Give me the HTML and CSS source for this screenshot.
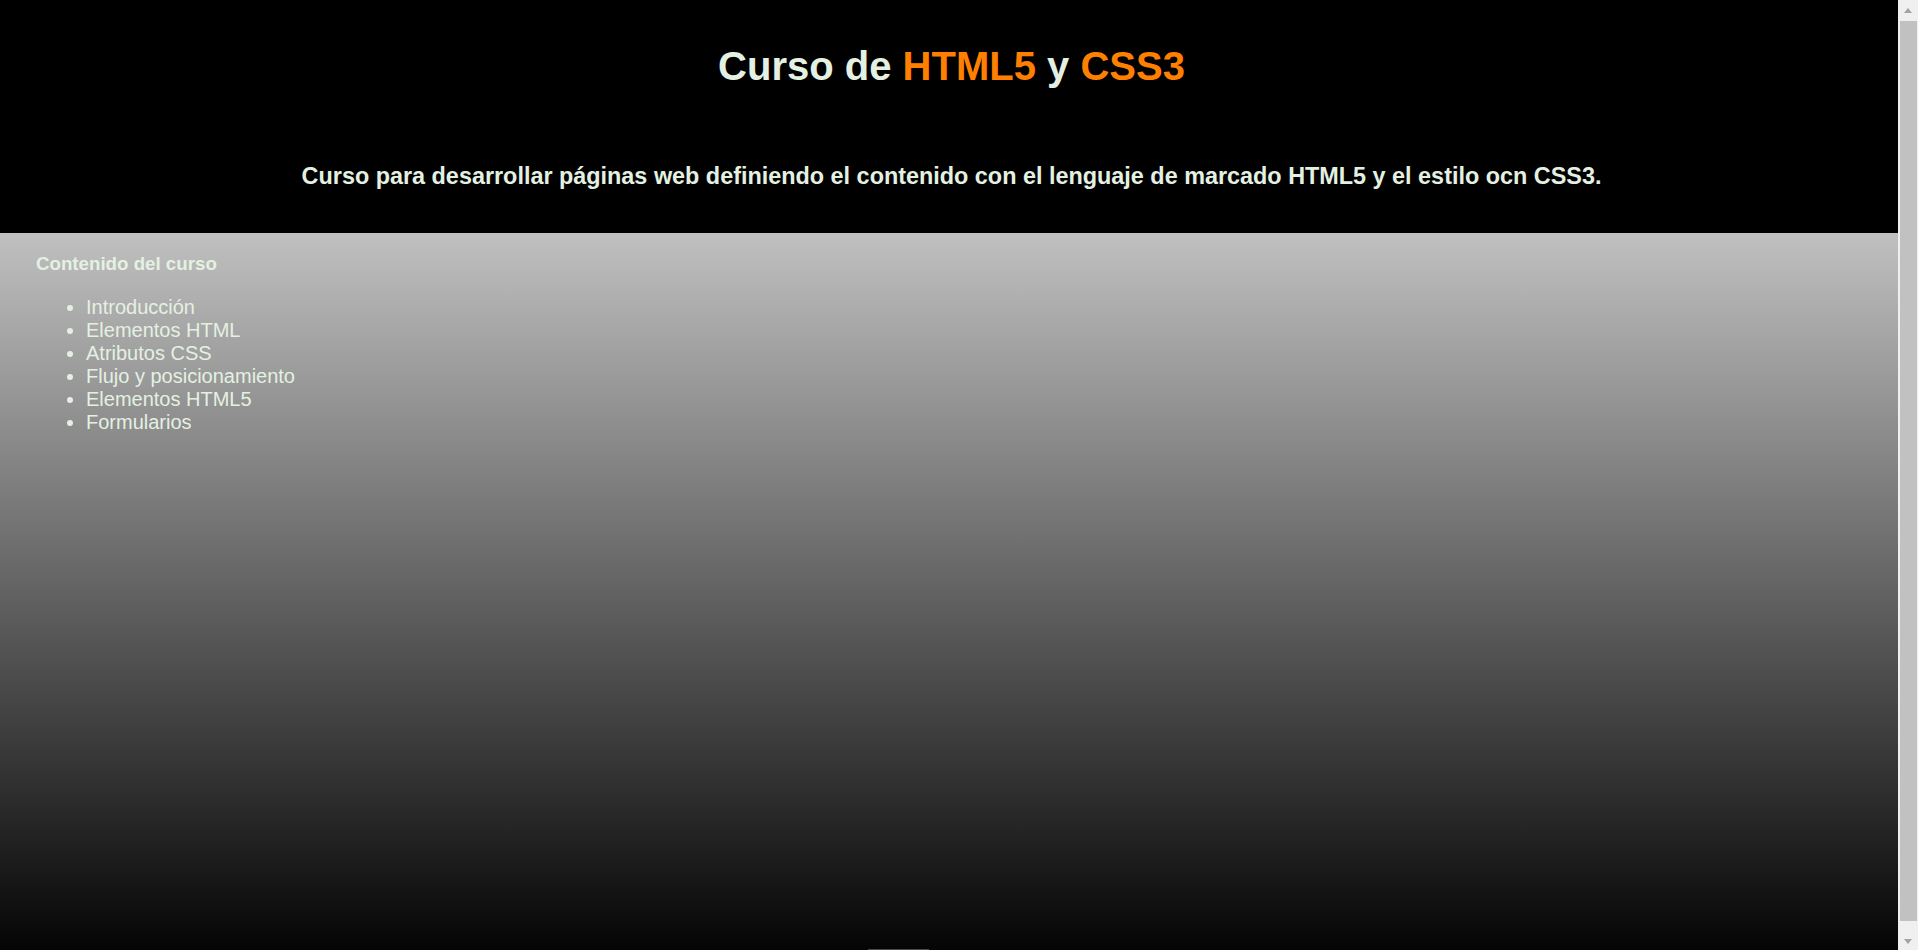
FILE: index.html
```html
<!DOCTYPE html>
<html lang="es">
<head>
<meta charset="utf-8">
<title>Curso de HTML5 y CSS3</title>
<link rel="stylesheet" href="styles.css">
</head>
<body>
<header class="cabecera">
  <h1 class="titulo">Curso de <span class="resalte">HTML5</span> y <span class="resalte">CSS3</span></h1>
  <p class="descripcion">Curso para desarrollar páginas web definiendo el contenido con el lenguaje de marcado HTML5 y el estilo ocn CSS3.</p>
</header>
<main class="contenido">
  <h3 class="contenido-titulo">Contenido del curso</h3>
  <ul class="temas">
    <li>Introducción</li>
    <li>Elementos HTML</li>
    <li>Atributos CSS</li>
    <li>Flujo y posicionamiento</li>
    <li>Elementos HTML5</li>
    <li>Formularios</li>
  </ul>
  <div class="pie"></div>
</main>
<div class="barra" aria-hidden="true">
  <div class="barra-flecha"><span class="tri tri-arriba"></span></div>
  <div class="barra-pista"><div class="barra-pulgar"></div></div>
  <div class="barra-flecha"><span class="tri tri-abajo"></span></div>
</div>
</body>
</html>
```
FILE: styles.css
```css
html, body {
  margin: 0;
  padding: 0;
}
body {
  margin-right: 20px;
  font-family: "Liberation Sans", Arial, sans-serif;
  color: #e4f1e2;
  background: #000;
}
.cabecera {
  background: #000;
  text-align: center;
  padding: 43px 0 43px 5px;
}
.titulo {
  margin: 0;
  font-size: 40px;
  font-weight: bold;
  line-height: 46px;
}
.resalte {
  color: #ff8000;
}
.descripcion {
  margin: 74px 0 0;
  font-size: 23.4px;
  font-weight: bold;
  line-height: 27px;
}
.contenido {
  display: flex;
  flex-direction: column;
  min-height: 735px;
  box-sizing: border-box;
  padding: 20px 0 0 36px;
  background: linear-gradient(to bottom, #c0c0c0, #000);
}
.contenido-titulo {
  margin: 0;
  font-size: 18.72px;
  font-weight: bold;
}
.temas {
  margin: 21px 0 0;
  padding-left: 50px;
  font-size: 20px;
  line-height: 23px;
}
.pie {
  margin-top: auto;
  margin-left: 832px;
  margin-bottom: 18px;
  width: 61px;
  height: 1px;
  background: #4a4a4a;
}
.barra {
  position: fixed;
  top: 0;
  right: 0;
  bottom: 0;
  width: 20px;
  display: flex;
  flex-direction: column;
  background: #f0f0f0;
}
.barra-flecha {
  height: 21px;
  display: flex;
  align-items: center;
  justify-content: center;
  flex: none;
}
.barra-pista {
  flex: 1;
  display: flex;
  flex-direction: column;
  padding: 0 1px 0 2px;
}
.barra-pulgar {
  flex: 1;
  margin-bottom: 8px;
  background: #c1c1c1;
}
.tri {
  width: 0;
  height: 0;
  border-left: 4.5px solid transparent;
  border-right: 4.5px solid transparent;
}
.tri-arriba {
  border-bottom: 5px solid #a3a3a3;
  margin-top: -1px;
}
.tri-abajo {
  border-top: 5px solid #a3a3a3;
  margin-top: 4px;
}
```
